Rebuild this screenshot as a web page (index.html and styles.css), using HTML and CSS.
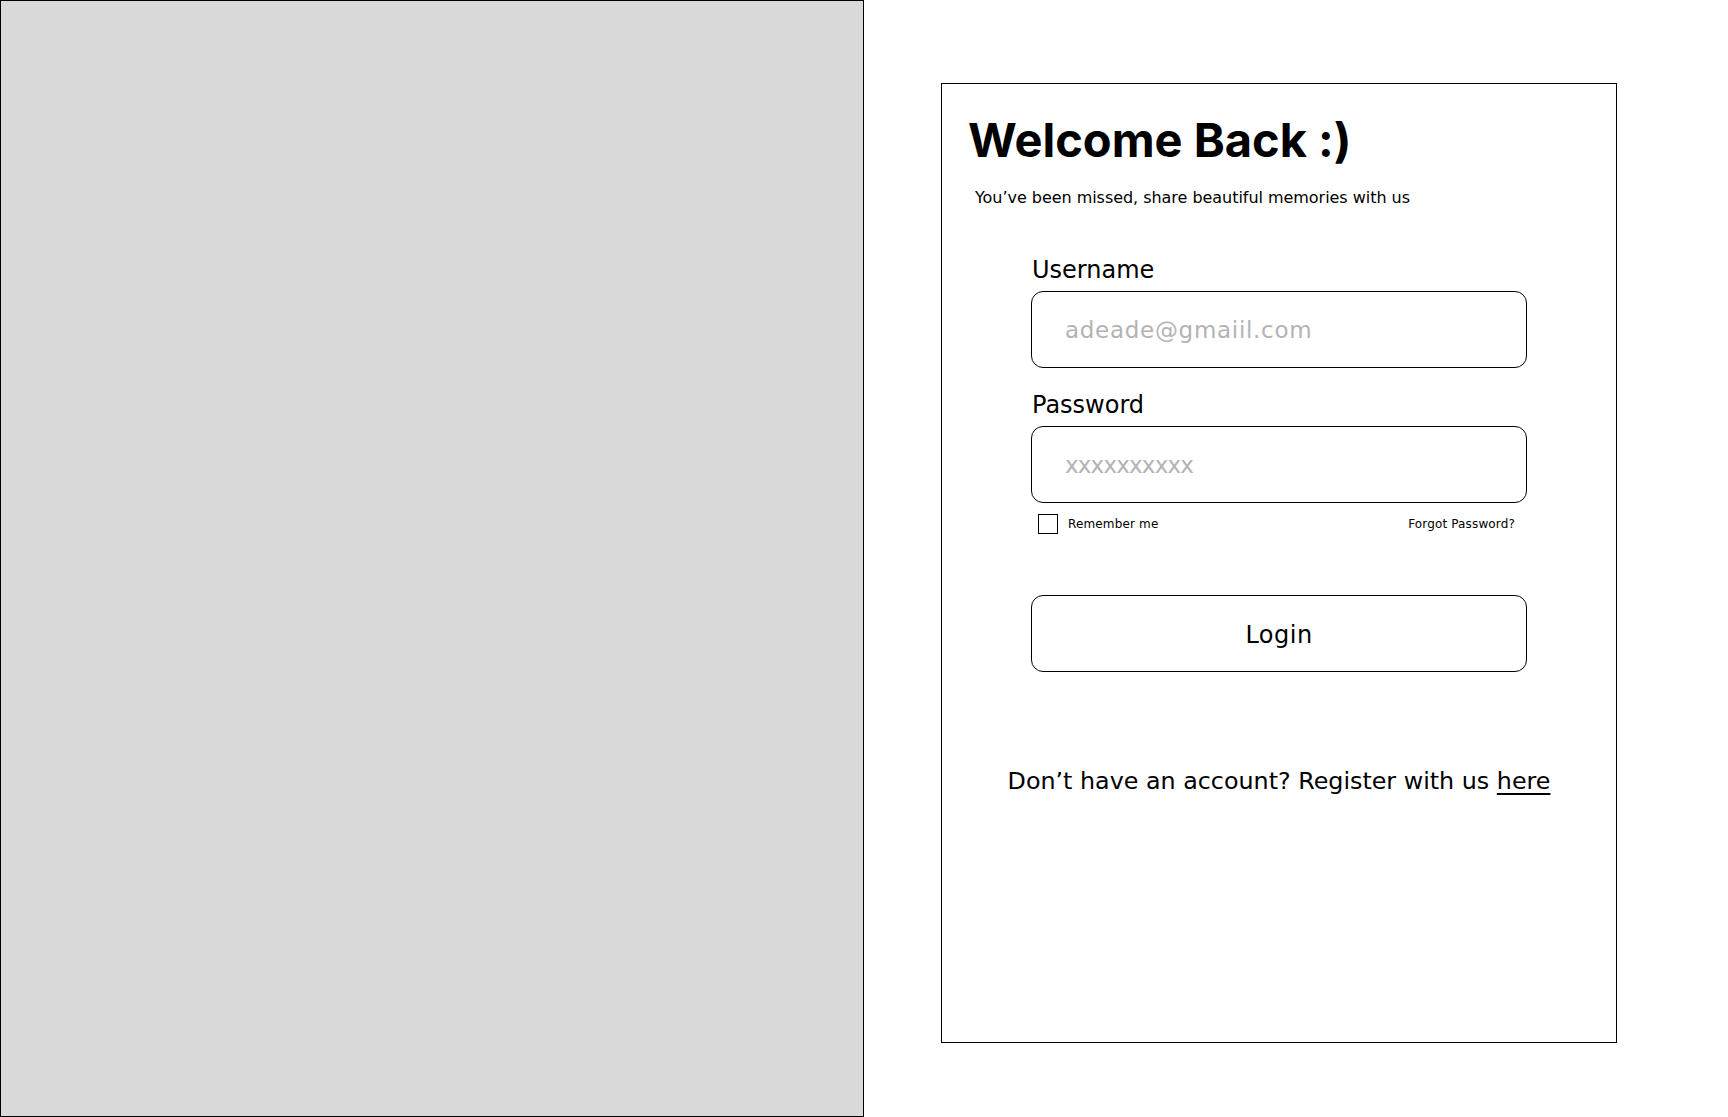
FILE: index.html
```html
<!DOCTYPE html>
<html lang="en">
<head>
<meta charset="utf-8">
<title>Login</title>
<link rel="stylesheet" href="styles.css">
</head>
<body>
<div class="page">
  <aside class="art"></aside>
  <main class="side">
    <section class="card">
      <h1 class="title">Welcome Back :)</h1>
      <p class="subtitle">You’ve been missed, share beautiful memories with us</p>
      <form class="form">
        <label class="label" for="username">Username</label>
        <input class="field" id="username" type="text" placeholder="adeade@gmaiil.com">
        <label class="label label-pw" for="password">Password</label>
        <input class="field field-pw" id="password" type="text" placeholder="xxxxxxxxxx">
        <div class="options">
          <label class="remember"><span class="box"></span>Remember me</label>
          <a class="forgot">Forgot Password?</a>
        </div>
        <button class="login" type="button">Login</button>
      </form>
      <p class="register">Don’t have an account? Register with us <a class="here">here</a></p>
    </section>
  </main>
</div>
</body>
</html>
```

FILE: styles.css
```css
* { box-sizing: border-box; }
html, body { margin: 0; padding: 0; background: #fff; }
body { font-family: "DejaVu Sans", "Lato", sans-serif; color: #000; }

.page { display: flex; width: 1728px; height: 1117px; overflow: hidden; }
.art { flex: none; width: 864px; height: 1117px; background: #d9d9d9; border: 1px solid #000; }
.side { flex: 1; padding: 83px 0 0 77px; }

.card {
  width: 676px;
  height: 960px;
  border: 1px solid #000;
  border-bottom-width: 1.5px;
  display: flex;
  flex-direction: column;
}

.title {
  margin: 27px 0 0 26px;
  font-family: "Inter", sans-serif;
  font-weight: 700;
  font-size: 47px;
  line-height: 57px;
}

.subtitle {
  margin: 20px 0 0 33px;
  font-size: 16px;
  line-height: 20px;
  letter-spacing: -0.04px;
}

.form {
  width: 496px;
  margin: 47px auto 0;
  display: flex;
  flex-direction: column;
}

.label {
  padding-top: 2px;
  font-size: 24px;
  line-height: 27px;
  margin-left: 1px;
}
.label-pw { margin-top: 22px; }

.field {
  margin-top: 7px;
  height: 77px;
  border: 1px solid #000;
  border-radius: 12px;
  padding: 0 0 0 33px;
  font-family: "DejaVu Sans", "Lato", sans-serif;
  font-size: 23px;
  letter-spacing: 0.7px;
  color: #000;
  background: #fff;
  outline: none;
}
.field-pw { letter-spacing: -0.8px; }
.field::placeholder { color: #b3b3b3; }

.options {
  margin-top: 11px;
  display: flex;
  justify-content: space-between;
  align-items: center;
  padding: 0 12px 0 7px;
  font-size: 12px;
  letter-spacing: 0.15px;
}
.remember { display: flex; align-items: center; gap: 10px; }
.box { width: 20px; height: 20px; border: 1.5px solid #000; background: #fff; }
.forgot { color: #000; }

.login {
  margin-top: 61px;
  height: 77px;
  padding-top: 3px;
  border: 1px solid #000;
  border-radius: 12px;
  background: #fff;
  font-family: "DejaVu Sans", "Lato", sans-serif;
  font-size: 24px;
  letter-spacing: 0.5px;
  color: #000;
  cursor: pointer;
}

.register {
  margin: 94px 0 0;
  text-align: center;
  font-size: 23.8px;
  line-height: 30px;
}
.here { color: #000; text-decoration: underline; text-underline-offset: 4px; }
```
